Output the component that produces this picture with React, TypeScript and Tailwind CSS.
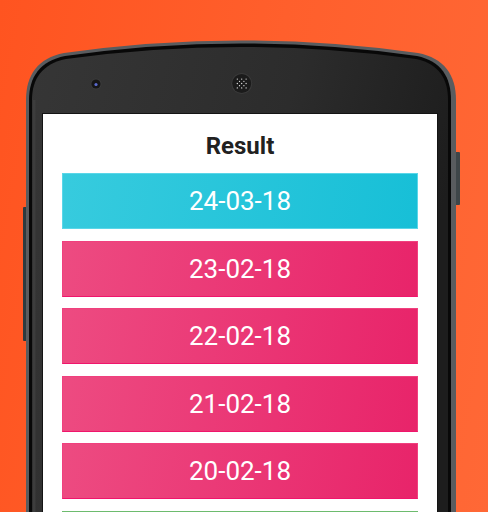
import React from "react";

const pink = "bg-[linear-gradient(100deg,#ed4b81_0%,#e8246a_100%)] border-[#f0407e] border-b-[#f0156c]";

const cards = [
  { label: "24-03-18", cls: "bg-[linear-gradient(100deg,#37cbde_0%,#17bfd7_100%)] border-[#5ad6e8]" },
  { label: "23-02-18", cls: pink },
  { label: "22-02-18", cls: pink },
  { label: "21-02-18", cls: pink },
  { label: "20-02-18", cls: pink },
  { label: "", cls: "bg-[linear-gradient(100deg,#6cc070_0%,#4caf50_100%)] border-[#6dbb6e]" },
];

function Speaker() {
  const dots: React.ReactNode[] = [];
  const s = 2.2;
  for (let i = -3; i <= 3; i++) {
    for (let j = -3; j <= 3; j++) {
      const x = i * s;
      const y = j * s;
      if (x * x + y * y > 6.6 * 6.6) continue;
      if ((i + j) % 2 !== 0) continue;
      dots.push(<circle key={`${i}-${j}`} cx={241.7 + x} cy={83.5 + y} r={0.65} fill="#e8e8e8" />);
    }
  }
  return (
    <g>
      <circle cx={241.7} cy={83.5} r={10.5} fill="#3a3a3a" />
      <circle cx={241.7} cy={83.5} r={9.5} fill="#1b1b1b" />
      {dots}
    </g>
  );
}

function PhoneFrame() {
  return (
    <svg className="absolute left-0 top-0" width="488" height="512" viewBox="0 0 488 512">
      <defs>
        <linearGradient id="body" x1="0" y1="0" x2="1" y2="0.3">
          <stop offset="0" stopColor="#363636" />
          <stop offset="0.6" stopColor="#2c2c2c" />
          <stop offset="1" stopColor="#1d1d1d" />
        </linearGradient>
      </defs>
      <rect x="23" y="207" width="4" height="134" rx="1" fill="#2c3a3f" />
      <rect x="454" y="152" width="6" height="53" rx="1" fill="#3e4649" />
      <path d="M26,520 L26,100 C26,75 38,58 64,53 Q241,28 418,53 C444,58 456,75 456,100 L456,520 Z" fill="#595c5f" />
      <path d="M29,520 L29,100 C29,77 40,61 65,56 Q241,31 417,56 C441,61 451,77 451,100 L451,520 Z" fill="#080808" />
      <path d="M32,520 L32,100 C32,79 42,64 66,59 Q241,35 416,59 C439,64 448,79 448,100 L448,520 Z" fill="url(#body)" />
      <rect x="33" y="100" width="2.5" height="420" fill="#3d3d3d" />
      <circle cx="96" cy="84" r="5.5" fill="#3c3c3c" />
      <circle cx="96" cy="84" r="4.6" fill="#161616" />
      <circle cx="96" cy="84.5" r="1.6" fill="#5a6ad0" />
      <Speaker />
    </svg>
  );
}

export default function App() {
  return (
    <div
      className="relative w-[488px] h-[512px] overflow-hidden bg-[linear-gradient(100deg,#ff5420_0%,#ff5f2c_50%,#ff6836_100%)]"
      style={{ fontFamily: "Roboto, 'Noto Sans', sans-serif" }}
    >
      <PhoneFrame />
      <div className="relative ml-[42px] mt-[113px] w-[396px] h-[420px] border border-[#141414] bg-white">
        <div className="pt-[18px] h-[28px] box-content text-center text-[24px] leading-[28px] font-bold text-[#212121]">
          Result
        </div>
        <div className="mt-[13px] mx-auto w-[356px] flex flex-col gap-[11.5px]">
          {cards.map((c, i) => (
            <div
              key={i}
              className={`h-[56px] border flex items-center justify-center text-white text-[26px] leading-[26px] ${c.cls}`}
            >
              {c.label}
            </div>
          ))}
        </div>
      </div>
    </div>
  );
}
